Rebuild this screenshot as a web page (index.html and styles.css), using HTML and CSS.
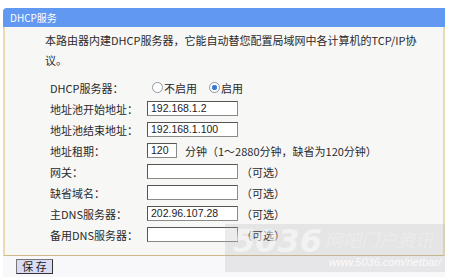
FILE: index.html
```html
<!DOCTYPE html>
<html lang="zh-CN">
<head>
    <meta charset="UTF-8">
    <title>DHCP服务</title>
    <link rel="stylesheet" href="styles.css">
</head>
<body>

<div class="wrap">
    <div class="title">DHCP服务</div>
    <div class="panel">
        <p class="intro">本路由器内建DHCP服务器，它能自动替您配置局域网中各计算机的TCP/IP协<br>议。</p>

        <div class="form">
            <span class="label">DHCP服务器：</span>
            <span class="field">
                <span class="radio"></span><span class="opt">不启用</span>
                <span class="radio checked"></span><span class="opt">启用</span>
            </span>

            <span class="label">地址池开始地址：</span>
            <span class="field"><span class="box">192.168.1.2</span></span>

            <span class="label">地址池结束地址：</span>
            <span class="field"><span class="box">192.168.1.100</span></span>

            <span class="label">地址租期：</span>
            <span class="field"><span class="box short">120</span><span class="note">分钟（1～2880分钟，缺省为120分钟）</span></span>

            <span class="label">网关：</span>
            <span class="field"><span class="box"></span><span class="note">（可选）</span></span>

            <span class="label">缺省域名：</span>
            <span class="field"><span class="box"></span><span class="note">（可选）</span></span>

            <span class="label">主DNS服务器：</span>
            <span class="field"><span class="box">202.96.107.28</span><span class="note">（可选）</span></span>

            <span class="label">备用DNS服务器：</span>
            <span class="field"><span class="box"></span><span class="note">（可选）</span></span>
        </div>
    </div>
    <div class="footer">
        <button type="button" class="save">保 存</button>
    </div>

    <div class="mark">
        <span class="mark-num">5036</span><span class="mark-cn">网吧门户资讯</span>
        <span class="mark-url">www.5036.com/netbar/</span>
    </div>
</div>

</body>
</html>
```

FILE: styles.css
```css
body {
    margin: 0;
    background-color: #fff;
    font-family: "Noto Sans CJK SC", "Liberation Sans", sans-serif;
    font-size: 11px;
    color: #2a2a2a;
}

.wrap {
    position: relative;
    width: 442px;
    margin-left: 3px;
    padding-top: 8px;
}

.title {
    height: 19px;
    line-height: 19px;
    padding-left: 7px;
    background-color: #6098f2;
    color: #fff;
    border-radius: 4px 0 0 0;
    font-size: 10px;
}

.panel {
    background-color: #f7f7f6;
    border-left: 2px solid #eadcb2;
    border-right: 2px solid #eadcb2;
    border-bottom: 1px solid #cdb887;
    padding: 3px 0 10px;
}

.intro {
    margin: 0 0 7px 40px;
    line-height: 20px;
    white-space: nowrap;
}

.form {
    display: grid;
    grid-template-columns: 97px auto;
    grid-auto-rows: 21px;
    align-items: center;
    padding-left: 45px;
}

.label {
    white-space: nowrap;
}

.field {
    display: flex;
    align-items: center;
    white-space: nowrap;
}

.box {
    box-sizing: border-box;
    width: 91px;
    height: 15px;
    line-height: 13px;
    padding-left: 3px;
    background-color: #fff;
    border: 1px solid #8a8a8a;
    border-top-color: #555;
    border-left-color: #555;
    font-family: "Liberation Sans", sans-serif;
    font-size: 10.5px;
    color: #222;
}

.box.short {
    width: 30px;
}

.note {
    margin-left: 3px;
}

.box.short + .note {
    margin-left: 8px;
}

.radio {
    box-sizing: border-box;
    width: 11px;
    height: 11px;
    margin: 0 1px 0 5px;
    border: 1px solid #8c97a8;
    border-radius: 50%;
    background-color: #fff;
}

.radio.checked {
    margin-left: 12px;
    background: radial-gradient(circle, #2f6fd0 0, #4a86e0 2.5px, #fff 3px);
}

.footer {
    height: 21px;
    display: flex;
    align-items: center;
    padding-left: 13px;
    background-color: #f8f8fa;
}

.save {
    height: 15px;
    width: 37px;
    padding: 0;
    background-color: #d9dcf2;
    border: 1px solid #333;
    border-top-color: #777;
    border-left-color: #777;
    font-family: "Noto Sans CJK SC", sans-serif;
    font-size: 11px;
    line-height: 13px;
    color: #222;
}

/* watermark over the lower right corner */
.mark {
    position: absolute;
    left: 222px;
    top: 224px;
    width: 220px;
    height: 48px;
    background-color: rgba(170, 170, 170, 0.22);
    color: rgba(255, 255, 255, 0.5);
    font-style: italic;
    pointer-events: none;
}

.mark-num {
    position: absolute;
    left: 8px;
    top: 0;
    font-family: "DejaVu Sans", sans-serif;
    font-weight: bold;
    font-size: 32px;
    line-height: 34px;
}

.mark-cn {
    position: absolute;
    left: 100px;
    top: 4px;
    font-size: 18px;
    line-height: 22px;
    color: rgba(240, 240, 240, 0.6);
}

.mark-url {
    position: absolute;
    left: 104px;
    top: 31px;
    font-family: "Liberation Sans", sans-serif;
    font-size: 11px;
    line-height: 14px;
    color: rgba(255, 255, 255, 0.85);
}
```
